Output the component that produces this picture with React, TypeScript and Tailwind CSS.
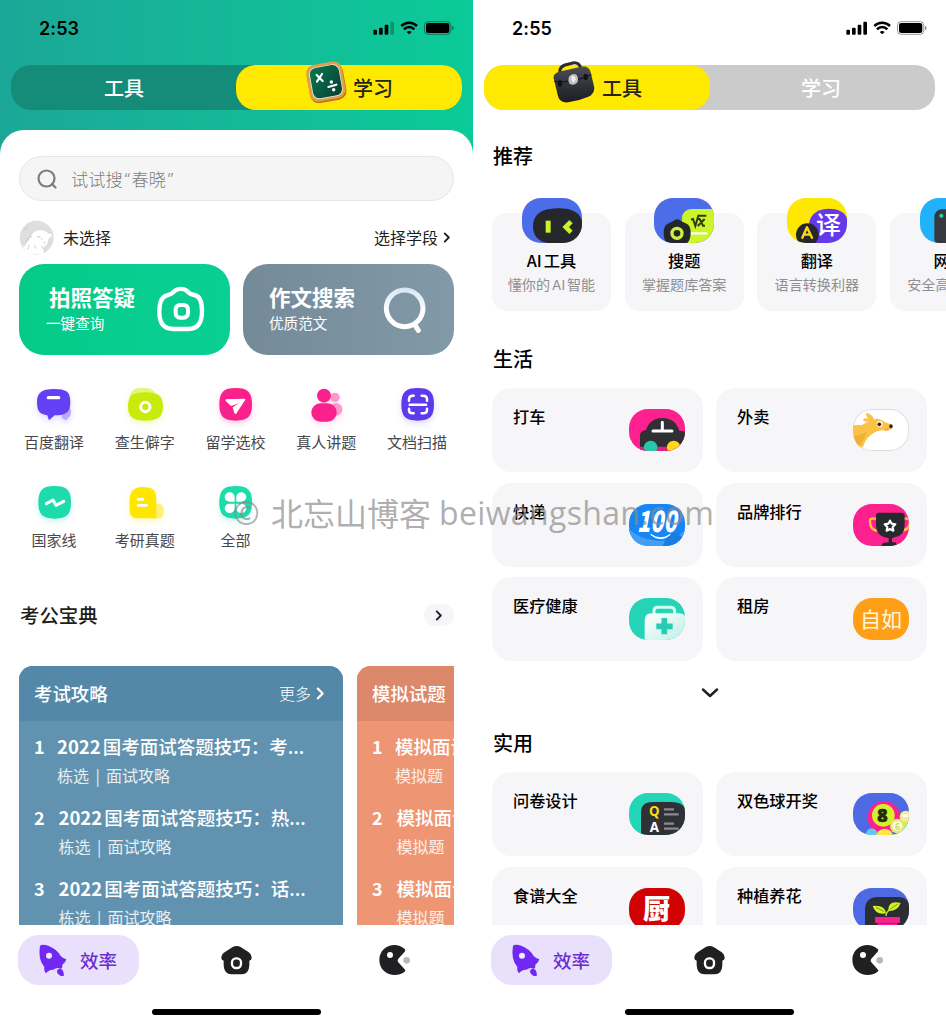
import type { ReactNode } from "react";

const CJK = "font-['Noto_Sans_CJK_SC',sans-serif]";

function StatusBar({ time, weak }: { time: string; weak?: boolean }) {
  return (
    <div className="flex h-[65px] shrink-0 items-start justify-between pl-[39px] pr-[19px] pt-[18px]">
      <span className="font-['Inter',sans-serif] text-[18px] font-semibold leading-[21px] tracking-[0.1px] text-black">{time}</span>
      <svg className="mt-[3px] h-[14px] w-[81px]" viewBox="0 0 243 42">
        <rect x="1" y="26" width="11" height="15" rx="3" />
        <rect x="18" y="20" width="11" height="21" rx="3" />
        <rect x="35" y="11" width="11" height="30" rx="3" />
        <rect x="52" y="2" width="11" height="39" rx="3" opacity={weak ? 0.25 : 1} />
        <path d="M85 15a33 33 0 0 1 47 0M93 25a21 21 0 0 1 31 0" fill="none" stroke="#000" strokeWidth="7.5" />
        <path d="M101 33q7.500-6 15 0l-7.500 7z" />
        <rect x="154.500" y="2" width="79" height="38" rx="11" fill="none" stroke="#000" strokeOpacity=".4" strokeWidth="3" />
        <rect x="159" y="6" width="70" height="30" rx="7" />
        <path d="M237 14q5 2 5 7t-5 7z" opacity=".45" />
      </svg>
    </div>
  );
}

function Chalkboard() {
  return (
    <svg className="size-[42px]" viewBox="0 0 126 126">
      <defs>
        <linearGradient id="board" x1="0" y1="0" x2="1" y2="1">
          <stop offset="0" stopColor="#09784f" />
          <stop offset="1" stopColor="#063f35" />
        </linearGradient>
      </defs>
      <g transform="rotate(-10 63 63)">
        <rect x="9" y="12" width="110" height="110" rx="26" fill="#b8731d" />
        <rect x="9" y="6" width="108" height="111" rx="25" fill="#dfa04e" />
        <rect x="17" y="14" width="92" height="96" rx="20" fill="#eef3dd" />
        <rect x="19" y="16" width="88" height="92" rx="19" fill="url(#board)" />
      </g>
      <g stroke="#fff" strokeWidth="6.5" strokeLinecap="round" fill="#fff">
        <path d="M35 42l18 18M51 39L36 62M70 78l24-7" />
        <circle cx="79" cy="63" r="2" />
        <circle cx="86" cy="86" r="2" />
      </g>
    </svg>
  );
}

function Briefcase() {
  return (
    <svg className="size-[42px]" viewBox="0 0 126 126">
      <defs>
        <linearGradient id="case" x1="0" y1="0" x2="0" y2="1">
          <stop offset="0" stopColor="#4d4f58" />
          <stop offset=".45" stopColor="#34363d" />
          <stop offset="1" stopColor="#1d1e23" />
        </linearGradient>
      </defs>
      <path d="M21 36Q18 19 36 12L60 6Q77 3 84 22" fill="none" stroke="#2b2c30" strokeWidth="9" />
      <path d="M2 52Q0 37 18 32L84 17Q108 13 113 34L123 76Q127 98 106 107Q78 119 46 124Q21 127 15 106Z" fill="url(#case)" />
      <path d="M4 62Q61 66 115 41" fill="none" stroke="#111216" strokeWidth="3" />
      <rect x="15" y="58" width="12" height="19" rx="5" fill="#101115" />
      <rect x="92" y="39" width="12" height="18" rx="5" fill="#101115" />
      <path d="M49 46q12-12 22-4q8 14 1 23q-9 10-21 4q-9-10-2-23z" fill="#bfc0c2" />
      <path d="M56 44q12-1 12 12q-4 8-9 8q-7-10-3-20z" fill="#ededee" />
    </svg>
  );
}

function TabBar({ active }: { active: "tools" | "study" }) {
  const tools = active === "tools";
  return (
    <div className={`mx-[11px] flex h-[45px] shrink-0 rounded-[20px] text-[20px] font-medium leading-[45px] ${tools ? "bg-[#cacbca]" : "bg-[#148c79]"}`}>
      <div className={`flex w-[226px] justify-center ${tools ? "rounded-[20px] bg-[#ffe900] text-[#25241c]" : "text-white"}`}>
        {tools && <span className="-mt-[4px] mr-[7px] block h-[42px]"><Briefcase /></span>}
        <span className={tools ? "mr-[-1px]" : ""}>工具</span>
      </div>
      <div className={`flex flex-1 justify-center ${tools ? "pr-[3px] text-white" : "-ml-px rounded-[20px] bg-[#ffe900] text-[#25241c]"}`}>
        {!tools && <span className="-mt-[4px] mr-[6px] block h-[42px]"><Chalkboard /></span>}
        <span>学习</span>
      </div>
    </div>
  );
}

function BottomNav() {
  return (
    <nav className="flex h-[99px] shrink-0 flex-col items-center bg-white">
      <div className="flex h-[60px] w-full items-center">
        <div className="ml-[18px] mt-[10px] flex h-[50px] w-[121px] items-center rounded-[21px] bg-[#e9e1fb] pl-[19px]">
          <svg className="size-[32px]" viewBox="0 0 96 96" fill="#7028f2">
            <path d="M9 5Q16 0 34 5Q60 15 71 36Q79 44 88 46Q87 54 76 62Q77 75 70 74Q60 69 49 77Q36 76 27 88Q20 81 22 69Q2 44 9 5Z" />
            <circle cx="36" cy="35" r="9" fill="#f1eafd" />
            <path d="M60 80q5-9 16-3q6 9 4 19q-9 1-14-4q-7-4-6-12z" />
          </svg>
          <span className="-mt-px ml-[11px] text-[18.5px] font-medium leading-[28px] text-[#692bd2]">效率</span>
        </div>
        <svg className="ml-[81px] mt-[10px] size-[33px]" viewBox="0 0 99 99">
          <path d="M37 10Q50 2 63 10L84 23Q95 30 95 42Q95 49 88 50V64Q87 91 65 91H35Q12 91 11 64V50Q4 49 4 42Q4 30 16 23Z" fill="#202022" />
          <rect x="36" y="43" width="27" height="29" rx="12" fill="none" stroke="#fff" strokeWidth="7" />
        </svg>
        <svg className="ml-[125px] mt-[10px] h-[33px] w-[34px]" viewBox="0 0 102 99">
          <path d="M80 15C52-10 4 7 4 48S51 105 80 83Q84 79 79 75L61 55Q57 50 61 44L80 23Q83 18 80 15Z" fill="#202022" />
          <circle cx="36" cy="33" r="9" fill="#fff" />
          <circle cx="86" cy="49" r="10" fill="#b8b8b9" />
        </svg>
      </div>
      <div className="mt-[24px] h-[6px] w-[169px] rounded-full bg-black" />
    </nav>
  );
}

const Squircle = ({ fill }: { fill: string }) => (
  <path d="M62 9C99 9 111 22 111 58S99 107 62 107S13 94 13 58S25 9 62 9Z" fill={fill} />
);

const shortcuts: { label: string; art: ReactNode; glow: string }[] = [
  {
    label: "百度翻译",
    glow: "drop-shadow-[0_3px_3px_#6548f433]",
    art: (
      <>
        <path d="M84 67q27-4 27 12q0 15-9 20l-6 7l-12-7z" fill="#bcaafb" />
        <path d="M60 12C97 12 109 20 109 51S97 91 62 91L45 106L40 91C17 88 9 78 9 51S22 12 60 12Z" fill="#6440f4" />
        <path d="M43 38H74" stroke="#fff" strokeWidth="10" strokeLinecap="round" />
      </>
    ),
  },
  {
    label: "查生僻字",
    glow: "drop-shadow-[0_3px_3px_#c9ec1140]",
    art: (
      <>
        <rect x="14" y="9" width="79" height="60" rx="28" fill="#e3f584" />
        <path d="M60 22C99 22 114 32 114 64S99 107 62 107S9 98 9 64S24 22 60 22Z" fill="#c9eb0c" />
        <circle cx="61" cy="66" r="14" fill="none" stroke="#fff" strokeWidth="9" />
      </>
    ),
  },
  {
    label: "留学选校",
    glow: "drop-shadow-[0_3px_3px_#ff218f38]",
    art: (
      <>
        <Squircle fill="#fb218c" />
        <path d="M34 43L87 41Q93 41 90 46L65 84Q61 90 58 84L53 67L72 55L48 63L33 49Q29 45 34 43Z" fill="#fff" />
      </>
    ),
  },
  {
    label: "真人讲题",
    glow: "drop-shadow-[0_3px_3px_#ff218f24]",
    art: (
      <>
        <circle cx="87" cy="37" r="14" fill="#fb99cc" />
        <circle cx="90" cy="73" r="19" fill="#fb99cc" />
        <circle cx="54" cy="32" r="21" fill="#fb218c" />
        <rect x="16" y="55" width="76" height="55" rx="27" fill="#fb218c" />
      </>
    ),
  },
  {
    label: "文档扫描",
    glow: "drop-shadow-[0_3px_3px_#6548f433]",
    art: (
      <>
        <Squircle fill="#5d3bed" />
        <path d="M38 59H87M36 47V43Q36 32 47 32H50M74 32H78Q90 32 90 43V47M90 71V75Q90 85 78 85H74M50 85H46Q36 85 36 75V71" fill="none" stroke="#fff" strokeWidth="7.500" strokeLinecap="round" />
      </>
    ),
  },
  {
    label: "国家线",
    glow: "drop-shadow-[0_3px_3px_#1ddbab38]",
    art: (
      <>
        <Squircle fill="#1ddbab" />
        <path d="M37 62L57 51L66 67L89 55" fill="none" stroke="#fff" strokeWidth="9" strokeLinejoin="round" strokeLinecap="round" />
      </>
    ),
  },
  {
    label: "考研真题",
    glow: "drop-shadow-[0_3px_3px_#ffe70040]",
    art: (
      <>
        <path d="M90 61q26-2 26 23t-22 22H80z" fill="#fff07a" />
        <path d="M53 12C87 12 94 24 94 53V106H38Q14 106 14 81V51Q14 12 53 12Z" fill="#ffe600" />
        <path d="M39 49H54M39 67H65" stroke="#fff" strokeWidth="8" strokeLinecap="round" />
      </>
    ),
  },
  {
    label: "全部",
    glow: "drop-shadow-[0_3px_3px_#1ddbab38]",
    art: (
      <>
        <Squircle fill="#1ddbab" />
        <path d="M59 56H44A15 14 0 1 1 59 42ZM64 56V42A15 14 0 1 1 79 56ZM59 62V76A15 14 0 1 1 44 62ZM64 62H79A15 14 0 1 1 64 76Z" fill="#fff" />
      </>
    ),
  },
];

const Chevron = ({ className }: { className: string }) => (
  <svg className={className} viewBox="0 0 8 12" fill="none" stroke="currentColor" strokeWidth="2" strokeLinecap="round" strokeLinejoin="round">
    <path d="M1.500 1.500L6 6l-4.500 4.500" />
  </svg>
);

function GuideItem({ index, title, sub }: { index: number; title: ReactNode; sub: string }) {
  return (
    <li className="flex h-[71px] pl-[15px] text-white">
      <span className={`shrink-0 text-[18px] font-bold leading-[26px] ${index === 1 ? "w-[23px]" : "w-[24.500px]"}`}>{index}</span>
      <div className="whitespace-nowrap">
        <div className="text-[18.500px] font-medium leading-[26px]">{title}</div>
        <div className="mt-[3px] text-[16px] leading-[26px] text-white/85 [word-spacing:2.800px]">{sub}</div>
      </div>
    </li>
  );
}

function StudyPhone() {
  return (
    <section className="flex h-[1024px] w-[473px] flex-col overflow-hidden bg-linear-to-r from-[#1ba797] via-[#14b999] to-[#0acb97]">
      <StatusBar time="2:53" weak />
      <TabBar active="study" />
      <div className="mt-[20px] flex min-h-0 flex-1 flex-col rounded-t-[24px] bg-white">
        <div className="min-h-0 flex-1 overflow-hidden px-[19px] pt-[26px]">
          <div className="flex h-[45px] items-center rounded-full border border-[#e6e6e6] bg-[#f5f5f5] pl-[17px]">
            <svg className="size-[20px]" viewBox="0 0 20 20" fill="none" stroke="#7d7d7e" strokeWidth="2.200">
              <circle cx="9.500" cy="9.500" r="8" />
              <path d="M15 15l3.500 3.500" strokeLinecap="round" />
            </svg>
            <span className="ml-[14px] flex text-[17.200px] font-light text-[#7c7c7d]">
              试试搜<span className="w-[9px] text-center font-['Noto_Sans',sans-serif]">“</span>春晓<span className="w-[9px] text-center font-['Noto_Sans',sans-serif]">”</span>
            </span>
          </div>
          <div className="mt-[19px] flex h-[34px] items-center text-[16px] text-[#1f1f20]">
            <svg className="size-[35px]" viewBox="0 0 105 105">
              <clipPath id="avatar"><circle cx="53" cy="53" r="51" /></clipPath>
              <g clipPath="url(#avatar)">
                <rect width="105" height="105" fill="#dfdfe0" />
                <path d="M44 35q17-10 29-5q12 2 15 10q11-4 12 7q-5 9-10 10l-4 16l-10 8l-1 24H29l-15-17q-7-11 4-19l8-6q7-18 18-28z" fill="#fff" stroke="#c6c4c5" strokeWidth="1.500" />
                <path d="M38 49q-14 6-17 19l-5 11M16 29l11-8M34 52l6-4M65 57l6-1M72 69l8-2M30 74l-4 15M47 75l3 11M68 77q1 11 9 10" fill="none" stroke="#bcb9bb" strokeWidth="2" />
                <path d="M54 50q5 3 10 0" fill="none" stroke="#a3a0a2" strokeWidth="2" />
              </g>
            </svg>
            <span className="ml-[9px]">未选择</span>
            <span className="ml-auto">选择学段</span>
            <Chevron className="ml-[5px] mr-[3px] h-[11px] w-[8px]" />
          </div>
          <div className="mt-[10px] flex gap-[13px] text-white">
            <div className="flex h-[91px] flex-1 rounded-[25px] bg-linear-to-r from-[#05cb87] to-[#0acf95]">
              <div className="w-[136px] pl-[27px] pt-[18px]">
                <div className="pl-[3px] text-[21.500px] font-bold leading-[30px]">拍照答疑</div>
                <div className="text-[14.600px] leading-[22px]">一键查询</div>
              </div>
              <svg className="mt-[22px] h-[48px] w-[50px]" viewBox="0 0 150 144">
                <path d="M60 14Q78 3 95 14Q106 26 118 27Q141 31 141 75Q141 129 101 129H55Q13 129 13 78Q13 33 36 28Q50 25 60 14Z" fill="none" stroke="#fff" strokeWidth="13" />
                <rect x="62" y="57" width="37" height="38" rx="13" fill="none" stroke="#fff" strokeWidth="12" />
              </svg>
            </div>
            <div className="flex h-[91px] flex-1 rounded-[25px] bg-linear-to-r from-[#748a98] to-[#8299a7]">
              <div className="w-[138px] pl-[26px] pt-[18px]">
                <div className="text-[21.500px] font-bold leading-[30px]">作文搜索</div>
                <div className="text-[14.600px] leading-[22px]">优质范文</div>
              </div>
              <svg className="mt-[22px] size-[48px]" viewBox="0 0 144 144">
                <defs>
                  <linearGradient id="lens" x1="0" y1="0" x2="0" y2="1">
                    <stop stopColor="#dae8f5" />
                    <stop offset=".6" stopColor="#fff" />
                  </linearGradient>
                </defs>
                <path d="M102 117l10 16" stroke="#fff" strokeWidth="15" strokeLinecap="round" />
                <circle cx="71" cy="67" r="55" fill="none" stroke="url(#lens)" strokeWidth="15" />
              </svg>
            </div>
          </div>
          <div className="-ml-[10px] -mr-[9px] mt-[30px] grid grid-cols-5 gap-y-[30px]">
            {shortcuts.map((s) => (
              <div key={s.label} className="-ml-px flex flex-col items-center">
                <svg className={`size-[40px] ${s.glow}`} viewBox="0 0 120 120">{s.art}</svg>
                <span className="mt-[7px] mb-px text-[15px] leading-[20px] text-[#48484a]">{s.label}</span>
              </div>
            ))}
          </div>
          <div className="mt-[53px] flex h-[22px] items-center justify-between text-[#1e1e20]">
            <h2 className="ml-px text-[19.400px] font-medium leading-[22px]">考公宝典</h2>
            <span className="flex h-[22px] w-[30px] items-center justify-center rounded-full bg-[#f6f5f7]">
              <Chevron className="h-[11px] w-[8px]" />
            </span>
          </div>
          <div className="mt-[40px] flex gap-[14px] overflow-hidden">
            <article className="h-[280px] w-[324px] shrink-0 overflow-hidden rounded-t-[14px] bg-[#6193b0]">
              <header className="flex h-[55px] items-center bg-[#5388a8] px-[15px] text-white">
                <span className="flex-1 text-[18.400px] font-medium">考试攻略</span>
                <span className="-mt-px text-[16px] font-light">更多</span>
                <Chevron className="ml-[5px] mr-[3px] h-[13px] w-[9px]" />
              </header>
              <ul className="pt-[12px]">
                <GuideItem index={1} title={<><b>2022</b><span className="ml-[2px]">国考面试答题技巧：考...</span></>} sub="栋选 | 面试攻略" />
                <GuideItem index={2} title={<><b>2022</b><span className="ml-[2px]">国考面试答题技巧：热...</span></>} sub="栋选 | 面试攻略" />
                <GuideItem index={3} title={<><b>2022</b><span className="ml-[2px]">国考面试答题技巧：话...</span></>} sub="栋选 | 面试攻略" />
              </ul>
            </article>
            <article className="h-[280px] w-[324px] shrink-0 overflow-hidden rounded-t-[14px] bg-[#ee9674]">
              <header className="flex h-[55px] items-center bg-[#dc886b] px-[15px] text-white">
                <span className="text-[18.400px] font-medium">模拟试题</span>
              </header>
              <ul className="pt-[12px]">
                <GuideItem index={1} title="模拟面试题" sub="模拟题" />
                <GuideItem index={2} title="模拟面试题" sub="模拟题" />
                <GuideItem index={3} title="模拟面试题" sub="模拟题" />
              </ul>
            </article>
          </div>
        </div>
        <BottomNav />
      </div>
    </section>
  );
}

const features: { title: ReactNode; sub: ReactNode; bg: string; art: ReactNode }[] = [
  {
    title: <>AI<span className="ml-[2px]">工具</span></>,
    sub: <>懂你的<span className="mx-[2px] font-['Inter',sans-serif] text-[13.500px]">AI</span>智能</>,
    bg: "bg-[#4c6de9]",
    art: (
      <>
        <path d="M105 31Q180 29 182 84Q181 134 130 136H90Q33 134 33 84Q33 33 105 31Z" fill="#26272b" />
        <rect x="71" y="68" width="15" height="36" fill="#c9f42b" />
        <path d="M147 71L131 87L147 103" fill="none" stroke="#c9f42b" strokeWidth="14" />
      </>
    ),
  },
  {
    title: "搜题",
    sub: "掌握题库答案",
    bg: "bg-[#4c6de9]",
    art: (
      <>
        <rect x="84" y="33" width="110" height="112" rx="27" fill="#cbf52a" />
        <path d="M111 65l6-2l7 21L133 53H157M131 63h6l10 20h6M152 63l-21 21" fill="none" stroke="#35390f" strokeWidth="6" />
        <path d="M108 106H160" stroke="#fff" strokeWidth="7" />
        <path d="M57 70Q69 58 82 70L98 77Q110 83 110 104Q110 125 99 136H40Q29 127 29 105Q29 82 41 77Z" fill="#25262a" />
        <circle cx="69" cy="106" r="15" fill="none" stroke="#d0ef3c" strokeWidth="10" />
      </>
    ),
  },
  {
    title: "翻译",
    sub: "语言转换利器",
    bg: "bg-[#ffe800]",
    art: (
      <>
        <path d="M124 32Q184 32 184 84T130 137H88Q67 128 65 90Q65 35 124 32Z" fill="#6438ed" />
        <text x="87" y="109" fontSize="75" fontWeight="500" fill="#fff">译</text>
        <circle cx="61" cy="110" r="34" fill="#26262b" />
        <path d="M46 119L60 88L75 119M52 110H69" fill="none" stroke="#ffdb1d" strokeWidth="7" strokeLinejoin="round" strokeLinecap="round" />
      </>
    ),
  },
  {
    title: "网盘",
    sub: "安全高速存储",
    bg: "bg-[#20b2fb]",
    art: (
      <>
        <rect x="43" y="34" width="112" height="110" rx="22" fill="#38393e" />
        <circle cx="64" cy="53" r="6" fill="#23d6a6" />
      </>
    ),
  },
];

const life: { label: string; bg: string; art: ReactNode }[] = [
  {
    label: "打车",
    bg: "bg-[#fc218e]",
    art: (
      <>
        <path d="M33 77Q34 66 51 63Q62 28 101 27Q139 28 151 65L170 68V128H33Z" fill="#303034" />
        <path d="M33 113V128H170V113Z" fill="#fc218e" opacity=".85" />
        <path d="M72 66H129M100 40V66" stroke="#fff" strokeWidth="9" strokeLinecap="round" />
        <circle cx="65" cy="115" r="20" fill="#28c7aa" />
        <circle cx="134" cy="115" r="20" fill="#ffd914" />
      </>
    ),
  },
  {
    label: "外卖",
    bg: "bg-white ring-1 ring-[#dedede] ring-inset",
    art: (
      <>
        <path d="M0 49Q14 47 27 48Q36 43 47 37Q31 40 30 32Q35 25 47 29Q34 17 42 11Q56 15 64 31Q77 26 89 35Q100 42 112 45Q121 51 116 60Q104 67 90 64Q67 66 57 76Q38 88 31 112L22 117L0 95Z" fill="#fbc246" />
        <path d="M4 80Q24 79 41 66Q36 88 23 106L17 112L9 104Q5 90 4 80Z" fill="#efb039" />
        <circle cx="80" cy="45" r="9" fill="#fff8e4" />
        <circle cx="79" cy="46" r="5.500" fill="#28211c" />
        <ellipse cx="114" cy="52" rx="5" ry="6" fill="#2b211e" />
        <path d="M96 63l12-3" stroke="#e8893c" strokeWidth="3" />
      </>
    ),
  },
  {
    label: "快递",
    bg: "bg-[#1685f6]",
    art: (
      <>
        <path d="M0 75Q30 104 82 110T168 77V126H0Z" fill="#439ff6" />
        <path d="M108 110L130 84L168 103V126H101Z" fill="#187ce2" />
        <text x="24" y="84" fontSize="88" fontWeight="900" fontStyle="italic" fill="#fff" textLength="119" lengthAdjust="spacingAndGlyphs">100</text>
        <path d="M65 91Q95 112 124 91Q112 104 95 104Q78 104 65 91Z" fill="#fff" stroke="#fff" strokeWidth="3" />
      </>
    ),
  },
  {
    label: "品牌排行",
    bg: "bg-[#fc218e]",
    art: (
      <>
        <path d="M74 44H57Q51 44 51 50Q50 80 77 80M145 44H164Q172 44 171 52Q170 80 142 80" fill="none" stroke="#ffc33e" strokeWidth="7" />
        <path d="M69 34Q69 26 77 26H147Q155 26 155 35V62Q155 94 127 99L117 103V115H128L133 126H86Q86 117 92 116L107 115V103Q69 97 69 64Z" fill="#28292e" />
        <path d="M111 50l5 9l11 2l-8 8l2 11l-10-5l-10 5l2-11l-8-8l11-2z" fill="none" stroke="#fff" strokeWidth="6.500" strokeLinejoin="round" />
      </>
    ),
  },
  {
    label: "医疗健康",
    bg: "bg-[#25d4b7]",
    art: (
      <>
        <defs>
          <linearGradient id="kit" x1="0" y1="0" x2="1" y2="1">
            <stop stopColor="#fff" />
            <stop offset="1" stopColor="#bceee5" />
          </linearGradient>
        </defs>
        <path d="M75 51V39Q75 28 86 28H124Q137 28 137 40V51" fill="none" stroke="#d4fbef" strokeWidth="9" />
        <path d="M47 67Q47 46 68 46H151Q168 46 172 65V129H47Z" fill="url(#kit)" />
        <path d="M106 60V109M82 85H131" stroke="#28cbb3" strokeWidth="17" />
      </>
    ),
  },
  {
    label: "租房",
    bg: "bg-[#ff9e17]",
    art: <text x="21" y="87" fontSize="63" fill="#fff7d7">自如</text>,
  },
];

const practical: { label: string; bg: string; art: ReactNode }[] = [
  {
    label: "问卷设计",
    bg: "bg-[#23d6b7]",
    art: (
      <>
        <path d="M36 59Q36 27 70 27H128Q173 27 173 68V130H44Q36 128 36 117Z" fill="#303136" />
        <text x="60" y="70" fontFamily="Noto Sans" fontWeight="700" fontSize="40" fill="#fadf18">Q</text>
        <text x="62" y="116" fontFamily="Noto Sans" fontWeight="700" fontSize="40" fill="#fff">A</text>
        <path d="M105 49h30M105 64h44M105 92h30M105 107h44" stroke="#888b8e" strokeWidth="7" />
      </>
    ),
  },
  {
    label: "双色球开奖",
    bg: "bg-[#4d69e4]",
    art: (
      <>
        <circle cx="93" cy="73" r="49" fill="#fc218e" />
        <circle cx="91" cy="67" r="34" fill="#d2f126" />
        <text x="73" y="86" fontFamily="Noto Sans" fontWeight="900" fontSize="53" fill="#242a12" stroke="#242a12" strokeWidth="2">8</text>
        <circle cx="56" cy="123" r="17" fill="#65c6f6" />
        <circle cx="95" cy="133" r="26" fill="#ffe442" />
        <circle cx="158" cy="71" r="18" fill="#ffe98a" />
        <circle cx="161" cy="105" r="20" fill="#c9ec69" />
        <circle cx="133" cy="99" r="22" fill="#dceb6c" />
        <circle cx="133" cy="99" r="15" fill="#fffce3" />
        <text x="125" y="110" fontSize="29" fontWeight="700" fill="#c8e457">6</text>
        <path d="M148 68h18" stroke="#fff" strokeWidth="8" />
      </>
    ),
  },
  {
    label: "食谱大全",
    bg: "bg-[#d10203]",
    art: <text x="42" y="93" fontSize="82" fontWeight="900" fill="#fff">厨</text>,
  },
  {
    label: "种植养花",
    bg: "bg-[#4d69e4]",
    art: (
      <>
        <path d="M36 62Q38 28 75 27H137Q172 28 172 70V130H36Z" fill="#2d2e33" />
        <path d="M99 84Q98 72 115 62" fill="none" stroke="#c9df2d" strokeWidth="4" />
        <path d="M59 54Q96 50 99 76Q68 82 59 54ZM143 45Q104 36 106 69Q134 70 143 45Z" fill="#cef429" />
        <path d="M69 58L93 70M134 48L112 63" stroke="#52651d" strokeWidth="2" />
        <path d="M66 87H141V104H134L128 128H78L73 104H66Z" fill="#fb218d" />
        <path d="M75 106H133" stroke="#be1774" strokeWidth="3" />
      </>
    ),
  },
];

function ToolCard({ label, bg, art }: { label: string; bg: string; art: ReactNode }) {
  return (
    <div className="flex h-[84px] justify-between rounded-[20px] bg-[#f6f5f7] pl-[21px] pr-[18px]">
      <span className="mt-[17px] text-[16.200px] font-medium leading-[22px] text-black">{label}</span>
      <span className={`mt-[21px] block h-[42px] w-[56px] overflow-hidden rounded-[19px] ${bg}`}>
        <svg className="h-[42px] w-[56px]" viewBox="0 0 168 126">{art}</svg>
      </span>
    </div>
  );
}

function ToolsPhone() {
  return (
    <section className="flex h-[1024px] w-[473px] flex-col overflow-hidden bg-white">
      <StatusBar time="2:55" />
      <TabBar active="tools" />
      <div className="min-h-0 flex-1 overflow-hidden pl-[19px] pt-[34px] text-black">
        <h2 className="ml-px text-[20px] font-medium leading-[24px]">推荐</h2>
        <div className="mt-[30px] flex gap-[13.700px] overflow-hidden">
          {features.map((f) => (
            <div key={f.bg + String(f.sub)} className="flex h-[113px] w-[119px] shrink-0 flex-col items-center">
              <div className="mt-[15px] flex h-[98px] w-[119px] flex-col items-center rounded-[15px] bg-[#f6f5f7]">
                <span className={`-mt-[15px] block h-[45px] w-[60px] shrink-0 overflow-hidden rounded-[19px] ${f.bg}`}>
                  <svg className="h-[45px] w-[60px]" viewBox="0 0 180 135">{f.art}</svg>
                </span>
                <span className="mt-[6px] text-[16.200px] font-medium leading-[22px]">{f.title}</span>
                <span className="mt-[3px] whitespace-nowrap text-[14.100px] leading-[20px] text-[#8f8e91]">{f.sub}</span>
              </div>
            </div>
          ))}
        </div>
        <h2 className="ml-px mt-[36px] text-[20px] font-medium leading-[24px]">生活</h2>
        <div className="mr-[19px] mt-[17px] grid grid-cols-2 gap-x-[13px] gap-y-[10.700px]">
          {life.map((t) => (
            <ToolCard key={t.label} {...t} />
          ))}
        </div>
        <div className="mr-[19px] mt-[20px] flex h-[24px] items-center justify-center">
          <svg className="h-[10px] w-[18px]" viewBox="0 0 18 10" fill="none" stroke="#202022" strokeWidth="2.400" strokeLinecap="round" strokeLinejoin="round">
            <path d="M2 1.500l7 6.500l7-6.500" />
          </svg>
        </div>
        <h2 className="ml-px mt-[26px] text-[20px] font-medium leading-[24px]">实用</h2>
        <div className="mr-[19px] mt-[17px] grid grid-cols-2 gap-x-[13px] gap-y-[10.700px]">
          {practical.map((t) => (
            <ToolCard key={t.label} {...t} />
          ))}
        </div>
      </div>
      <BottomNav />
    </section>
  );
}

export default function App() {
  return (
    <main className={`relative flex h-[1024px] w-[946px] overflow-hidden bg-white ${CJK}`}>
      <StudyPhone />
      <ToolsPhone />
      <div className="pointer-events-none absolute left-[233px] top-[491px] flex whitespace-nowrap font-['Open_Sans','Noto_Sans_CJK_SC',sans-serif] text-[32px] leading-[44px] text-[#8c8c8c]/70">
        <span className="w-[38px]">©</span>
        <span className="-mt-px w-[168px] font-['Noto_Sans_CJK_SC',sans-serif]">北忘山博客</span>
        <span className="tracking-[0.350px]">beiwangshan.com</span>
      </div>
    </main>
  );
}
